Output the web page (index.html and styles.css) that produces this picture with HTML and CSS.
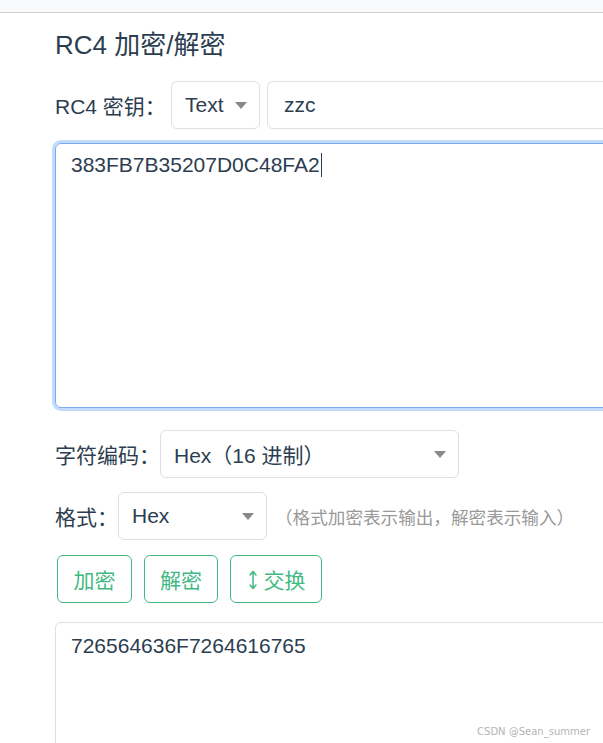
FILE: index.html
```html
<!DOCTYPE html>
<html lang="zh-CN">
<head>
<meta charset="utf-8">
<title>RC4 加密/解密</title>
<link rel="stylesheet" href="styles.css">
</head>
<body>
<div class="topbar"></div>
<main class="main">
  <h1 class="title">RC4 加密/解密</h1>

  <div class="row row-key">
    <span class="label lbl-key">RC4 密钥：</span>
    <div class="select sel-text"><span>Text</span><i class="arrow"></i></div>
    <div class="input">zzc</div>
  </div>

  <div class="textbox focused"><span>383FB7B35207D0C48FA2</span><span class="caret"></span></div>

  <div class="row row-enc">
    <span class="label lbl-enc">字符编码：</span>
    <div class="select sel-enc"><span>Hex（16 进制）</span><i class="arrow"></i></div>
  </div>

  <div class="row row-fmt">
    <span class="label lbl-fmt">格式：</span>
    <div class="select sel-fmt"><span>Hex</span><i class="arrow"></i></div>
    <span class="hint">（格式加密表示输出，解密表示输入）</span>
  </div>

  <div class="buttons">
    <button class="btn btn-enc">加密</button>
    <button class="btn btn-dec">解密</button>
    <button class="btn btn-swap"><svg class="swap-icon" width="8" height="20" viewBox="0 0 8 20"><path d="M4 1.5V18.5M1 5L4 1.5L7 5M1 15L4 18.5L7 15" fill="none" stroke="currentColor" stroke-width="1.5" stroke-linecap="round" stroke-linejoin="round"/></svg>交换</button>
  </div>

  <div class="textbox output">726564636F7264616765</div>
</main>
<div class="watermark">CSDN @Sean_summer</div>
</body>
</html>
```

FILE: styles.css
```css
html, body {
  margin: 0;
  padding: 0;
  overflow: hidden;
  background: #fff;
}

body {
  font-family: "Liberation Sans", "Noto Sans CJK SC", sans-serif;
  font-size: 21px;
  color: #2c3e50;
  height: 743px;
  position: relative;
}

.topbar {
  height: 12px;
  background: #f8f9fa;
  border-bottom: 1px solid #cfcfcf;
}

.main {
  width: 600px;
  padding-left: 55px;
}

.title {
  margin: 17px 0 0;
  font-size: 26px;
  font-weight: normal;
  line-height: 30px;
  color: #2c3e50;
}

.row {
  display: flex;
  align-items: center;
}

.row-key { margin-top: 21px; }
.row-enc { margin-top: 22px; }
.row-fmt { margin-top: 14px; }

.label {
  flex: none;
  white-space: nowrap;
}

.lbl-key { width: 116px; }
.lbl-enc { width: 105px; }
.lbl-fmt { width: 63px; }

.select,
.input {
  box-sizing: border-box;
  height: 48px;
  border: 1px solid #dcdfe6;
  border-radius: 6px;
  display: flex;
  align-items: center;
  background: #fff;
}

.select {
  flex: none;
  justify-content: space-between;
  padding: 0 12px 0 13px;
}

.sel-text { width: 89px; }
.sel-enc { width: 299px; }
.sel-fmt { width: 149px; }

.arrow {
  width: 0;
  height: 0;
  border-left: 6px solid transparent;
  border-right: 6px solid transparent;
  border-top: 7px solid #888;
}

.input {
  flex: 1;
  margin-left: 7px;
  padding: 0 16px;
}

.hint {
  margin-left: 8px;
  font-size: 17.6px;
  color: #999;
  white-space: nowrap;
}

.textbox {
  box-sizing: border-box;
  border: 1px solid #dcdfe6;
  border-radius: 6px;
  line-height: 24px;
}

.focused {
  margin-top: 14px;
  height: 265px;
  padding: 9px 15px;
  border-color: #7eaaf0;
  box-shadow: 0 0 0 3px #c2dafc;
}

.caret {
  display: inline-block;
  width: 1px;
  height: 24px;
  background: #2c3e50;
  vertical-align: top;
  margin-left: 1px;
}

.buttons {
  display: flex;
  gap: 12px;
  margin-top: 15px;
  padding-left: 2px;
}

.btn {
  box-sizing: border-box;
  height: 48px;
  border: 1px solid #42b983;
  border-radius: 6px;
  background: #fff;
  color: #42b983;
  font-family: inherit;
  font-size: 21px;
  display: flex;
  align-items: center;
  justify-content: center;
  padding: 0;
}

.btn-enc { width: 75px; }
.btn-dec { width: 74px; }
.btn-swap { width: 92px; gap: 7px; padding-left: 2px; }

.swap-icon { display: block; margin-top: 2px; }

.output {
  margin-top: 19px;
  height: 140px;
  padding: 11px 15px;
}

.watermark {
  position: absolute;
  right: 13px;
  bottom: 6px;
  font-size: 10px;
  color: #b4b4b4;
  font-family: "DejaVu Sans", sans-serif;
}
```
